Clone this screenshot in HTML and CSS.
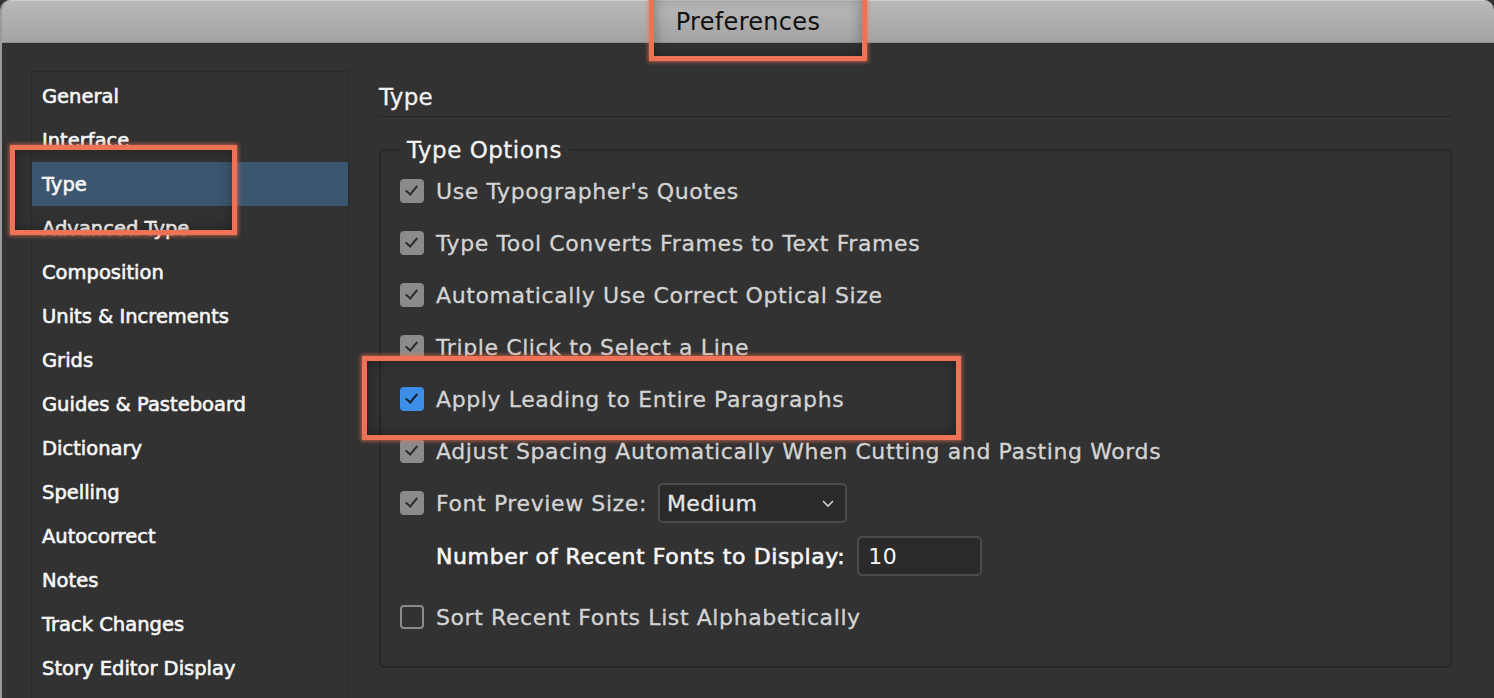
FILE: index.html
```html
<!DOCTYPE html>
<html lang="en">
<head>
  <meta charset="UTF-8">
  <title>Preferences</title>
  <link rel="stylesheet" href="styles.css">
</head>
<body>
  <div class="window">
    <div class="titlebar">Preferences</div>

    <div class="panes">
      <ul class="sidebar">
        <li>General</li>
        <li>Interface</li>
        <li class="selected">Type</li>
        <li>Advanced Type</li>
        <li>Composition</li>
        <li>Units &amp; Increments</li>
        <li>Grids</li>
        <li>Guides &amp; Pasteboard</li>
        <li>Dictionary</li>
        <li>Spelling</li>
        <li>Autocorrect</li>
        <li>Notes</li>
        <li>Track Changes</li>
        <li>Story Editor Display</li>
      </ul>

      <div class="content">
        <h2>Type</h2>

        <fieldset class="group">
          <legend>Type Options</legend>

          <div class="row"><span class="box on"></span>Use Typographer's Quotes</div>
          <div class="row"><span class="box on"></span>Type Tool Converts Frames to Text Frames</div>
          <div class="row"><span class="box on"></span>Automatically Use Correct Optical Size</div>
          <div class="row"><span class="box on"></span>Triple Click to Select a Line</div>
          <div class="row"><span class="box blue"></span>Apply Leading to Entire Paragraphs</div>
          <div class="row"><span class="box on"></span>Adjust Spacing Automatically When Cutting and Pasting Words</div>
          <div class="row"><span class="box on"></span>Font Preview Size:
            <div class="select">Medium
              <svg width="14" height="9" viewBox="0 0 14 9"><path d="M2 2 L7 7 L12 2" fill="none" stroke="#cfcfcf" stroke-width="1.6"/></svg>
            </div>
          </div>
          <div class="row indent strong">Number of Recent Fonts to Display:
            <div class="field">10</div>
          </div>
          <div class="row last"><span class="box"></span>Sort Recent Fonts List Alphabetically</div>
        </fieldset>
      </div>
    </div>
  </div>

  <!-- callout boxes drawn over the screenshot -->
  <div class="callout c-title"></div>
  <div class="callout c-type"></div>
  <div class="callout c-lead"></div>
</body>
</html>
```

FILE: styles.css
```css
/* Page and window frame */
body {
  margin: 0;
  background: #323232;
  font-family: 'DejaVu Sans', 'Liberation Sans', sans-serif;
  overflow: hidden;
}

.window {
  height: 698px;
  background: #323232;
  border-left: 2px solid #9a9a9a;
  border-radius: 10px 10px 0 0;
  overflow: hidden;
}

.titlebar {
  height: 43px;
  background: linear-gradient(#b9b9b9, #a3a3a3);
  border-top: 1px solid #d0d0d0;
  border-bottom: 1px solid #8e8e8e;
  box-sizing: border-box;
  text-align: center;
  font-size: 24px;
  letter-spacing: 0.3px;
  line-height: 42px;
  color: #111;
}

/* Two panes */
.panes {
  display: flex;
  padding: 28px 0 0 29px;
}

.sidebar {
  list-style: none;
  margin: 0;
  padding: 2px 0 0;
  width: 316px;
  height: 640px;
  border: 1px solid #2a2a2a;
  border-bottom: none;
  flex-shrink: 0;
}

.sidebar li {
  height: 44px;
  line-height: 46px;
  padding-left: 10px;
  font-size: 19.5px;
  color: #f7f7f7;
  -webkit-text-stroke: 0.6px #f7f7f7;
  white-space: nowrap;
}

.sidebar li.selected {
  background: #3c5670;
}

.content {
  margin-left: 30px;
  width: 1073px;
}

h2 {
  margin: 0;
  font-size: 23px;
  font-weight: normal;
  letter-spacing: 0.3px;
  color: #f2f2f2;
  -webkit-text-stroke: 0.3px #f2f2f2;
  height: 45px;
  line-height: 52px;
  border-bottom: 1px solid #262626;
}

/* Group box */
.group {
  margin: 20px 0 0;
  padding: 0 0 0 19px;
  height: 531px;
  border: 2px solid #272727;
  border-radius: 5px;
  box-sizing: border-box;
}

.group legend {
  margin-left: 0;
  padding: 0 7px;
  font-size: 23px;
  letter-spacing: 0.5px;
  color: #f2f2f2;
  -webkit-text-stroke: 0.3px #f2f2f2;
  line-height: 26px;
}

.row {
  display: flex;
  align-items: center;
  height: 52px;
  font-size: 22px;
  letter-spacing: 0.6px;
  color: #d4d4d4;
  -webkit-text-stroke: 0.3px #d4d4d4;
  white-space: nowrap;
}

.row:first-of-type {
  margin-top: 2px;
}

.row.indent {
  padding-left: 36px;
  height: 54px;
}

.row.strong {
  color: #f7f7f7;
  -webkit-text-stroke: 0.6px #f7f7f7;
}

.row.last {
  margin-top: 8px;
}

.box {
  width: 24px;
  height: 24px;
  border-radius: 4px;
  margin-right: 12px;
  box-sizing: border-box;
  border: 2px solid #8a8a8a;
  flex-shrink: 0;
  position: relative;
}

.box.on {
  background: #8b8b8b;
}

.box.blue {
  background: #3d8ee6;
  border-color: #3d8ee6;
}

.box.on::after,
.box.blue::after {
  content: "";
  position: absolute;
  left: 6px;
  top: 2px;
  width: 5px;
  height: 10px;
  border: solid #2d2d2d;
  border-width: 0 2.5px 2.5px 0;
  transform: rotate(40deg);
}

.box.blue::after {
  border-color: #14202e;
}

.select,
.field {
  display: flex;
  align-items: center;
  height: 40px;
  box-sizing: border-box;
  background: #2a2a2a;
  border: 2px solid #4b4b4b;
  border-radius: 5px;
  color: #e6e6e6;
  -webkit-text-stroke: 0.3px #e6e6e6;
  letter-spacing: 0.4px;
}

.select {
  width: 189px;
  margin-left: 11px;
  padding: 0 10px 0 7px;
  justify-content: space-between;
}

.field {
  width: 125px;
  margin-left: 12px;
  padding-left: 9px;
  color: #f5f5f5;
  -webkit-text-stroke: 0;
}

/* Red callouts */
.callout {
  position: absolute;
  border: 5px solid #ee7256;
  box-shadow: 0 0 4px 1px rgba(238, 114, 86, 0.7), inset 0 0 14px rgba(0, 0, 0, 0.35);
}

.c-title {
  left: 649px;
  top: -8px;
  width: 208px;
  height: 59px;
}

.c-type {
  left: 10px;
  top: 145px;
  width: 217px;
  height: 80px;
}

.c-lead {
  left: 362px;
  top: 356px;
  width: 589px;
  height: 74px;
}
```
